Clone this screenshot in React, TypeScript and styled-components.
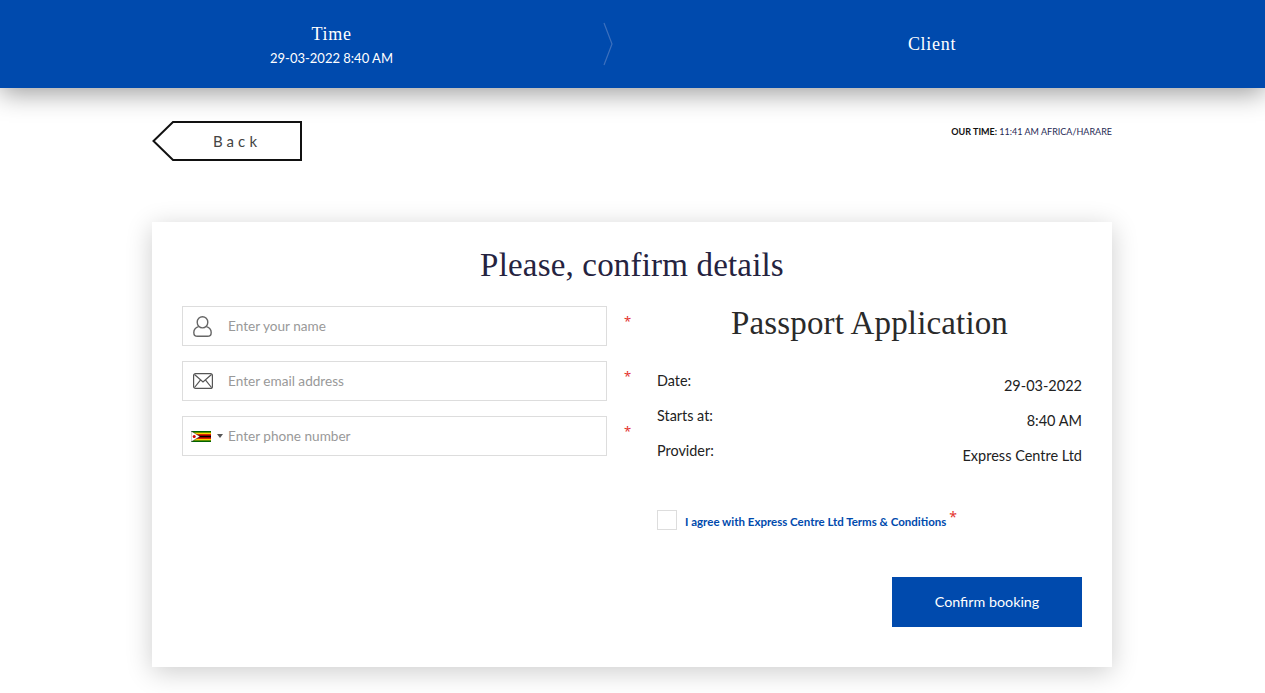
import React from 'react';
import styled, { createGlobalStyle } from 'styled-components';

const serif = '"Liberation Serif", "DejaVu Serif", serif';
const sans = 'Lato, "Noto Sans", sans-serif';

const GlobalStyle = createGlobalStyle`
	html, body {
		margin: 0;
		padding: 0;
		background: #fff;
		font-family: ${sans};
	}
	* {
		box-sizing: border-box;
	}
`;

function UserIcon() {
	return (
		<svg width="19" height="21" viewBox="0 0 19 21" fill="none" stroke="#666" strokeWidth="1.4">
			<ellipse cx="9.5" cy="6.3" rx="5.3" ry="5.6" />
			<path d="M5.6 10.6 C2.6 11.6 0.8 13.6 0.8 16.4 C0.8 19.2 2 20.3 4.6 20.3 H14.4 C17 20.3 18.2 19.2 18.2 16.4 C18.2 13.6 16.4 11.6 13.4 10.6" />
		</svg>
	);
}

function MailIcon() {
	return (
		<svg width="20" height="16" viewBox="0 0 20 16" fill="none" stroke="#555" strokeWidth="1.2">
			<rect x="0.6" y="0.6" width="18.8" height="14.8" rx="2" />
			<path d="M1.5 1.5 L10 9 L18.5 1.5 M1.5 14.5 L7.6 6.8 M18.5 14.5 L12.4 6.8" />
		</svg>
	);
}

function ZimbabweFlag() {
	return (
		<svg width="20" height="11" viewBox="0 0 20 11">
			<rect width="20" height="11" fill="#006400" />
			<rect y="1.6" width="20" height="7.8" fill="#ffd200" />
			<rect y="3.2" width="20" height="4.6" fill="#d40000" />
			<rect y="4.7" width="20" height="1.6" fill="#000" />
			<path d="M0 0 L9 5.5 L0 11 Z" fill="#fff" stroke="#000" strokeWidth="0.4" />
			<circle cx="3.2" cy="5.5" r="1.5" fill="#d40000" />
		</svg>
	);
}

export default function App() {
	return (
		<>
			<GlobalStyle />
			<Header>
				<Step>
					<StepTitle>Time</StepTitle>
					<StepValue>29-03-2022 8:40 AM</StepValue>
				</Step>
				<Chevron width="10" height="44" viewBox="0 0 10 44" fill="none">
					<path d="M1 1 L9 22 L1 43" stroke="#3c70bd" strokeWidth="1.2" />
				</Chevron>
				<Step>
					<StepTitle>Client</StepTitle>
				</Step>
			</Header>
			<Page>
				<TopRow>
					<BackButton type="button">
						<BackShape width="150" height="40" viewBox="0 0 150 40" fill="none">
							<path d="M149 1 H21 L1.5 20 L21 39 H149 Z" stroke="#111" strokeWidth="2" fill="#fff" />
						</BackShape>
						<BackLabel>Back</BackLabel>
					</BackButton>
					<OurTime>
						<b>OUR TIME:</b> 11:41 AM AFRICA/HARARE
					</OurTime>
				</TopRow>
				<Card>
					<CardTitle>Please, confirm details</CardTitle>
					<Columns>
						<FormColumn>
							<FieldRow>
								<InputBox>
									<IconSlot>
										<UserIcon />
									</IconSlot>
									<Placeholder>Enter your name</Placeholder>
								</InputBox>
								<Required>*</Required>
							</FieldRow>
							<FieldRow>
								<InputBox>
									<IconSlot>
										<MailIcon />
									</IconSlot>
									<Placeholder>Enter email address</Placeholder>
								</InputBox>
								<Required>*</Required>
							</FieldRow>
							<FieldRow>
								<InputBox>
									<FlagSlot>
										<ZimbabweFlag />
										<Caret />
									</FlagSlot>
									<Placeholder>Enter phone number</Placeholder>
								</InputBox>
								<Required>*</Required>
							</FieldRow>
						</FormColumn>
						<SummaryColumn>
							<ServiceTitle>Passport Application</ServiceTitle>
							<DetailRow>
								<DetailLabel>Date:</DetailLabel>
								<DetailValue>29-03-2022</DetailValue>
							</DetailRow>
							<DetailRow>
								<DetailLabel>Starts at:</DetailLabel>
								<DetailValue>8:40 AM</DetailValue>
							</DetailRow>
							<DetailRow>
								<DetailLabel>Provider:</DetailLabel>
								<DetailValue>Express Centre Ltd</DetailValue>
							</DetailRow>
							<AgreeRow>
								<CheckBox />
								<AgreeText>I agree with Express Centre Ltd Terms &amp; Conditions</AgreeText>
								<AgreeStar>*</AgreeStar>
							</AgreeRow>
							<ConfirmRow>
								<ConfirmButton type="button">Confirm booking</ConfirmButton>
							</ConfirmRow>
						</SummaryColumn>
					</Columns>
				</Card>
			</Page>
		</>
	);
}

const Header = styled.header`
	display: grid;
	grid-template-columns: 543px 10px 638px;
	align-items: center;
	height: 88px;
	padding-left: 60px;
	background: #004aad;
	box-shadow: 0 5px 25px rgba(0, 0, 0, 0.4);
	color: #fff;
`;

const Step = styled.div`
	display: flex;
	flex-direction: column;
	align-items: center;
	gap: 3px;
`;

const StepTitle = styled.div`
	font-family: ${serif};
	font-size: 18px;
	letter-spacing: 0.7px;
	line-height: 24px;
`;

const StepValue = styled.div`
	font-size: 13px;
	line-height: 18px;
`;

const Chevron = styled.svg`
	display: block;
`;

const Page = styled.main`
	width: 960px;
	margin-left: 152px;
	padding-bottom: 26px;
`;

const TopRow = styled.div`
	display: flex;
	justify-content: space-between;
	align-items: flex-start;
	padding-top: 33px;
	height: 134px;
`;

const BackButton = styled.button`
	position: relative;
	width: 150px;
	height: 40px;
	padding: 0 0 0 20px;
	border: 0;
	background: none;
`;

const BackShape = styled.svg`
	position: absolute;
	top: 0;
	left: 0;
`;

const BackLabel = styled.span`
	position: relative;
	font-family: ${sans};
	font-size: 15px;
	letter-spacing: 4.1px;
	color: #444;
`;

const OurTime = styled.div`
	padding-top: 5px;
	font-family: Lato, sans-serif;
	font-size: 9px;
	line-height: 12px;
	color: #1f2a55;

	b {
		color: #111;
	}
`;

const Card = styled.section`
	height: 445px;
	padding: 24px 30px 0;
	background: #fff;
	box-shadow: 0 5px 25px rgba(0, 0, 0, 0.2);
`;

const CardTitle = styled.h1`
	margin: 0 0 21px;
	font-family: ${serif};
	font-size: 33px;
	font-weight: 400;
	line-height: 39px;
	letter-spacing: 0.18px;
	text-align: center;
	color: #25233f;
`;

const Columns = styled.div`
	display: grid;
	grid-template-columns: 475px 425px;
`;

const FormColumn = styled.div`
	display: flex;
	flex-direction: column;
	gap: 15px;
`;

const FieldRow = styled.div`
	display: flex;
	gap: 17px;
`;

const InputBox = styled.div`
	display: flex;
	align-items: center;
	width: 425px;
	height: 40px;
	border: 1px solid #ddd;
`;

const IconSlot = styled.div`
	display: flex;
	align-items: center;
	width: 45px;
	padding-left: 10px;
`;

const FlagSlot = styled.div`
	display: flex;
	align-items: center;
	gap: 6px;
	width: 45px;
	padding-left: 8px;
`;

const Caret = styled.span`
	border-left: 3px solid transparent;
	border-right: 3px solid transparent;
	border-top: 4px solid #555;
`;

const Placeholder = styled.span`
	font-size: 13.6px;
	line-height: 18px;
	color: #999;
`;

const Required = styled.span`
	font-family: "Noto Sans", sans-serif;
	font-size: 13px;
	line-height: 30px;
	color: #e4342f;
`;

const SummaryColumn = styled.div`
	display: flex;
	flex-direction: column;
`;

const ServiceTitle = styled.h2`
	margin: 0 0 30px;
	font-family: ${serif};
	font-size: 33px;
	font-weight: 400;
	line-height: 34px;
	letter-spacing: 0.15px;
	text-align: center;
	color: #2a2a2a;
`;

const DetailRow = styled.div`
	display: flex;
	justify-content: space-between;
	height: 35px;
`;

const DetailLabel = styled.span`
	font-size: 14.4px;
	line-height: 22px;
	color: #222;
`;

const DetailValue = styled.span`
	padding-top: 5px;
	font-size: 14.5px;
	line-height: 21px;
	color: #222;
`;

const AgreeRow = styled.div`
	display: flex;
	align-items: center;
	margin-top: 35px;
	height: 20px;
`;

const CheckBox = styled.span`
	width: 20px;
	height: 20px;
	border: 1px solid #ddd;
`;

const AgreeText = styled.span`
	margin-left: 8px;
	padding-top: 3px;
	font-size: 11.5px;
	font-weight: 700;
	color: #004aad;
`;

const AgreeStar = styled.span`
	margin-left: 3px;
	margin-top: -8px;
	font-family: "Noto Sans", sans-serif;
	font-size: 14px;
	color: #e4342f;
`;

const ConfirmRow = styled.div`
	display: flex;
	justify-content: flex-end;
	margin-top: 47px;
`;

const ConfirmButton = styled.button`
	width: 190px;
	height: 50px;
	padding: 0 0 2px;
	border: 0;
	background: #004aad;
	font-family: ${sans};
	font-size: 14.3px;
	color: #fff;
`;
